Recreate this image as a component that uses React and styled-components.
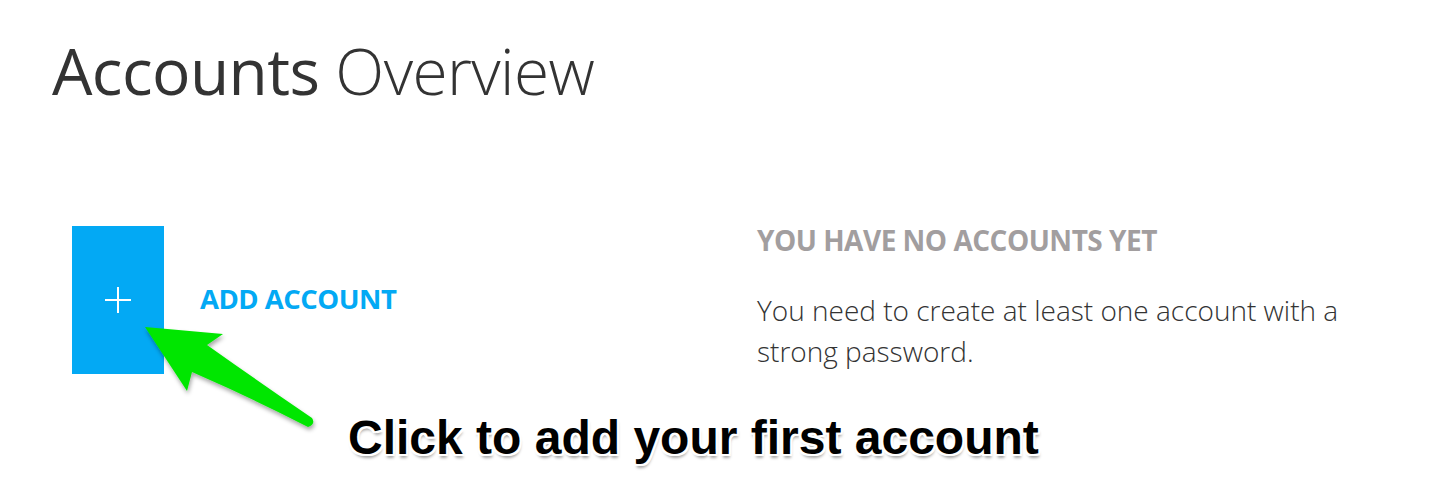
import React from 'react'
import styled, { createGlobalStyle } from 'styled-components'

const GlobalStyle = createGlobalStyle`
  html, body {
    margin: 0;
    padding: 0;
    background: #ffffff;
  }
  body {
    font-family: "Open Sans", "Noto Sans", sans-serif;
    color: #333333;
  }
`

const Page = styled.div`
  position: relative;
  width: 1432px;
  height: 496px;
  overflow: hidden;
  padding-left: 52px;
  box-sizing: border-box;
`

const Title = styled.h1`
  margin: 38px 0 0;
  font-size: 64px;
  line-height: 66px;
  font-weight: 400;
  color: #333333;
  letter-spacing: -0.6px;
`

const Light = styled.span`
  font-weight: 300;
`

const Content = styled.div`
  display: grid;
  grid-template-columns: 705px 1fr;
  margin-top: 122px;
`

const AddRow = styled.div`
  display: flex;
  align-items: center;
  gap: 36px;
  padding-left: 20px;
`

const AddTile = styled.button`
  width: 92px;
  height: 148px;
  border: none;
  padding: 0;
  background: #03a9f4;
  display: flex;
  align-items: center;
  justify-content: center;
  cursor: pointer;
`

const AddLabel = styled.span`
  font-size: 27.5px;
  font-weight: 700;
  color: #03a9f4;
  letter-spacing: -0.5px;
  margin-top: -4px;
`

const EmptyState = styled.div`
  padding-top: 0;
`

const EmptyHeading = styled.h2`
  margin: 0;
  font-size: 28px;
  line-height: 28px;
  font-weight: 700;
  color: #a29e9f;
  letter-spacing: -0.5px;
`

const EmptyText = styled.p`
  margin: 36px 0 0;
  width: 610px;
  font-size: 28px;
  line-height: 41px;
  font-weight: 300;
  color: #333333;
`

const Callout = styled.div`
  position: absolute;
  left: 0;
  top: 0;
  width: 100%;
  height: 100%;
  pointer-events: none;
`

const CalloutText = styled.div`
  position: absolute;
  left: 348px;
  top: 410px;
  font-family: "Liberation Sans", Arial, sans-serif;
  font-weight: 700;
  font-size: 48px;
  line-height: 56px;
  color: #000000;
  text-shadow:
    -2px -2px 0 #fff, 2px -2px 0 #fff, -2px 2px 0 #fff, 2px 2px 0 #fff,
    0 -2px 0 #fff, 0 2px 0 #fff, -2px 0 0 #fff, 2px 0 0 #fff,
    1px 4px 3px rgba(0, 0, 0, 0.35);
  white-space: nowrap;
`

const PlusIcon = () => (
  <svg width="26" height="26" viewBox="0 0 26 26">
    <path d="M13 0v26M0 13h26" stroke="#fff" strokeWidth="2" />
  </svg>
)

const ArrowIcon = () => (
  <svg width="1432" height="496" viewBox="0 0 1432 496" style={{ position: 'absolute', left: 0, top: 0 }}>
    <defs>
      <filter id="arrowShadow" x="-20%" y="-20%" width="140%" height="140%">
        <feDropShadow dx="1" dy="3" stdDeviation="2" floodColor="#000" floodOpacity="0.35" />
      </filter>
    </defs>
    <path
      d="M145 327 L223 334 L207 345 Q262 384 312 418 Q316 424 308 427 Q252 398 192 372 L187 391 Z"
      fill="#00e600"
      filter="url(#arrowShadow)"
    />
  </svg>
)

export default function App() {
  return (
    <>
      <GlobalStyle />
      <Page>
        <Title>
          Accounts <Light>Overview</Light>
        </Title>
        <Content>
          <AddRow>
            <AddTile aria-label="Add account">
              <PlusIcon />
            </AddTile>
            <AddLabel>ADD ACCOUNT</AddLabel>
          </AddRow>
          <EmptyState>
            <EmptyHeading>YOU HAVE NO ACCOUNTS YET</EmptyHeading>
            <EmptyText>You need to create at least one account with a strong password.</EmptyText>
          </EmptyState>
        </Content>
        <Callout>
          <ArrowIcon />
          <CalloutText>Click to add your first account</CalloutText>
        </Callout>
      </Page>
    </>
  )
}
